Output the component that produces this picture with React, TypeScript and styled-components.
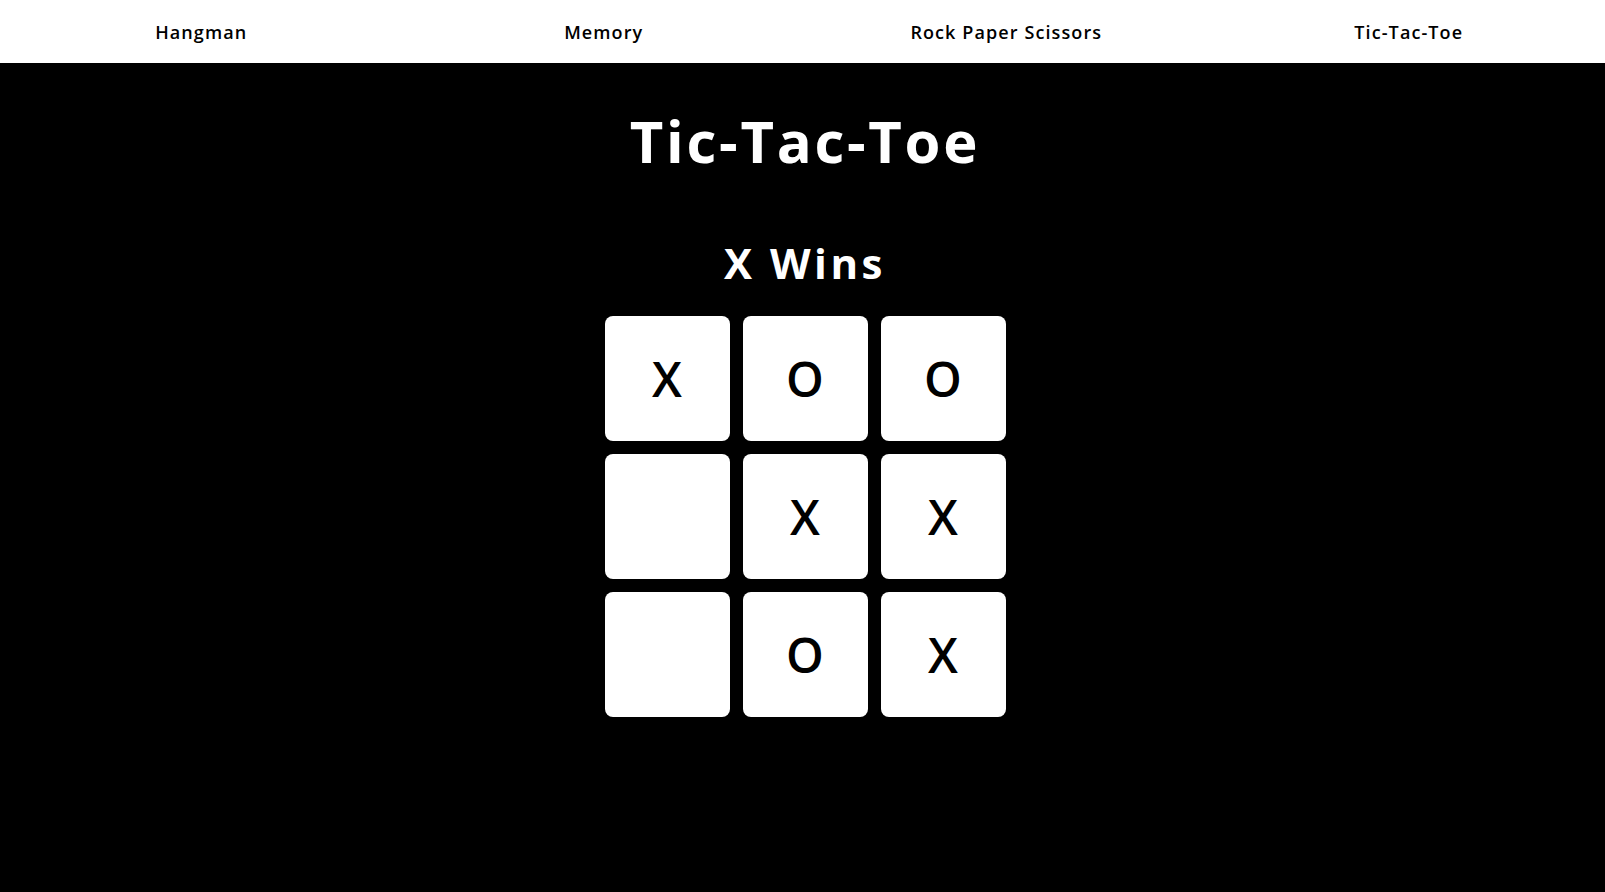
import React from "react";
import styled, { createGlobalStyle } from "styled-components";

const Global = createGlobalStyle`
  html, body { margin: 0; padding: 0; background: #000; overflow: hidden; }
  body { font-family: "Open Sans", "Noto Sans", sans-serif; }
`;

const Page = styled.div`
  width: 1610px;
  min-height: 892px;
  background: #000;
  display: flex;
  flex-direction: column;
`;

const Nav = styled.nav`
  height: 63px;
  background: #fff;
  display: grid;
  grid-template-columns: repeat(4, 1fr);
  align-items: center;
`;

const NavLink = styled.a`
  text-align: center;
  color: #000;
  text-decoration: none;
  font-size: 18px;
  font-weight: 600;
  letter-spacing: 1.1px;
  line-height: 1;
`;

const Main = styled.main`
  display: flex;
  flex-direction: column;
  align-items: center;
  color: #fff;
`;

const Title = styled.h1`
  margin: 49px 0 0;
  font-size: 58px;
  font-weight: 700;
  letter-spacing: 2.7px;
  line-height: 1;
`;

const Status = styled.h2`
  margin: 72px 0 0;
  font-size: 42px;
  font-weight: 700;
  letter-spacing: 3.5px;
  line-height: 1;
`;

const Board = styled.div`
  margin-top: 32px;
  display: grid;
  grid-template-columns: repeat(3, 125px);
  grid-auto-rows: 125px;
  gap: 13px;
`;

const Cell = styled.button`
  border: none;
  padding: 0;
  background: #fff;
  border-radius: 8px;
  color: #000;
  font-family: inherit;
  font-size: 48px;
  font-weight: 600;
  line-height: 1;
  display: flex;
  align-items: center;
  justify-content: center;
  cursor: pointer;
`;

const cells = ["X", "O", "O", "", "X", "X", "", "O", "X"];

export default function App() {
  return (
    <Page>
      <Global />
      <Nav>
        <NavLink href="#">Hangman</NavLink>
        <NavLink href="#">Memory</NavLink>
        <NavLink href="#">Rock Paper Scissors</NavLink>
        <NavLink href="#">Tic-Tac-Toe</NavLink>
      </Nav>
      <Main>
        <Title>Tic-Tac-Toe</Title>
        <Status>X Wins</Status>
        <Board>
          {cells.map((c, i) => (
            <Cell key={i}>{c}</Cell>
          ))}
        </Board>
      </Main>
    </Page>
  );
}
